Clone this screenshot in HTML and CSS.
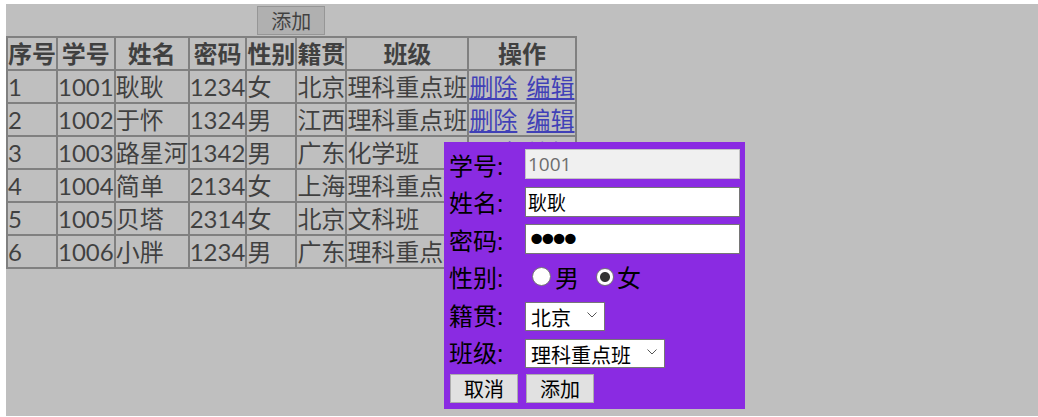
FILE: index.html
```html
<!DOCTYPE html>
<html lang="zh">
<head>
    <meta charset="UTF-8">
    <meta name="viewport" content="width=device-width, initial-scale=1.0">
    <title>学生管理</title>
    <link rel="stylesheet" href="styles.css">
</head>
<body>
    <div class="page">
        <!-- 学生列表 -->
        <div class="list">
            <button class="btn add-top">添加</button>
            <table class="students">
                <tr><th>序号</th><th>学号</th><th>姓名</th><th>密码</th><th>性别</th><th>籍贯</th><th>班级</th><th>操作</th></tr>
                <tr><td>1</td><td>1001</td><td>耿耿</td><td>1234</td><td>女</td><td>北京</td><td>理科重点班</td><td class="ops"><a href="#">删除</a> <a href="#">编辑</a></td></tr>
                <tr><td>2</td><td>1002</td><td>于怀</td><td>1324</td><td>男</td><td>江西</td><td>理科重点班</td><td class="ops"><a href="#">删除</a> <a href="#">编辑</a></td></tr>
                <tr><td>3</td><td>1003</td><td>路星河</td><td>1342</td><td>男</td><td>广东</td><td>化学班</td><td class="ops"><a href="#">删除</a> <a href="#">编辑</a></td></tr>
                <tr><td>4</td><td>1004</td><td>简单</td><td>2134</td><td>女</td><td>上海</td><td>理科重点班</td><td class="ops"><a href="#">删除</a> <a href="#">编辑</a></td></tr>
                <tr><td>5</td><td>1005</td><td>贝塔</td><td>2314</td><td>女</td><td>北京</td><td>文科班</td><td class="ops"><a href="#">删除</a> <a href="#">编辑</a></td></tr>
                <tr><td>6</td><td>1006</td><td>小胖</td><td>1234</td><td>男</td><td>广东</td><td>理科重点班</td><td class="ops"><a href="#">删除</a> <a href="#">编辑</a></td></tr>
            </table>
        </div>

        <!-- 遮罩 -->
        <div class="mask"></div>

        <!-- 编辑弹窗 -->
        <form class="dialog">
            <div class="row">
                <label>学号:</label>
                <input class="field" type="text" value="1001" disabled>
            </div>
            <div class="row">
                <label>姓名:</label>
                <input class="field" type="text" value="耿耿">
            </div>
            <div class="row">
                <label>密码:</label>
                <input class="field pwd" type="password" value="1234">
            </div>
            <div class="row">
                <label>性别:</label>
                <input class="radio first" type="radio" name="sex"><span>男</span>
                <input class="radio second" type="radio" name="sex" checked><span>女</span>
            </div>
            <div class="row">
                <label>籍贯:</label>
                <span class="select">
                    <select class="city">
                        <option>北京</option>
                        <option>江西</option>
                        <option>广东</option>
                        <option>上海</option>
                    </select>
                    <svg width="10" height="6" viewBox="0 0 10 6"><polyline points="0.5,0.5 5,5 9.5,0.5" fill="none" stroke="#555" stroke-width="1"/></svg>
                </span>
            </div>
            <div class="row">
                <label>班级:</label>
                <span class="select">
                    <select class="klass">
                        <option>理科重点班</option>
                        <option>化学班</option>
                        <option>文科班</option>
                    </select>
                    <svg width="10" height="6" viewBox="0 0 10 6"><polyline points="0.5,0.5 5,5 9.5,0.5" fill="none" stroke="#555" stroke-width="1"/></svg>
                </span>
            </div>
            <div class="row buttons">
                <button type="button" class="btn">取消</button>
                <button type="button" class="btn">添加</button>
            </div>
        </form>
    </div>
</body>
</html>
```

FILE: styles.css
```css
body {
    margin: 0;
    font-family: "Open Sans", "Noto Sans CJK SC", sans-serif;
    background-color: white;
}
.page {
    position: relative;
    margin: 4px 0 0 6px;
    height: 412px;
    padding-top: 2px;
    box-sizing: border-box;
}
.list {
    display: inline-block;
}
.btn {
    font-family: "Noto Sans CJK SC", sans-serif;
    font-size: 20px;
    width: 68px;
    height: 29px;
    padding: 0;
    line-height: 27px;
    color: black;
    background-color: #e1e1e1;
    border: 1px solid #adadad;
}
.add-top {
    display: block;
    margin: 0 auto 1px;
}
.students {
    border: 1px solid #808080;
    border-spacing: 0;
    font-family: Lato, "Noto Sans CJK SC", sans-serif;
    font-size: 24px;
    line-height: 31px;
    color: black;
}
.students th, .students td {
    border: 1px solid #808080;
    padding: 0;
    white-space: nowrap;
}
.students .ops {
    word-spacing: 3px;
}
.students a {
    color: #0000ee;
}
.mask {
    position: absolute;
    top: 0;
    left: 0;
    right: 0;
    bottom: 0;
    background-color: rgba(128, 128, 128, 0.5);
}
.dialog {
    position: absolute;
    left: 438px;
    top: 138px;
    width: 301px;
    height: 267px;
    box-sizing: border-box;
    margin: 0;
    padding: 7px 5px 6px;
    background-color: #8a2be2;
    display: flex;
    flex-direction: column;
    gap: 7.5px;
}
.row {
    display: flex;
    align-items: center;
    height: 30px;
    font-size: 24px;
    color: black;
}
.row label {
    width: 76px;
    flex: none;
}
.field {
    width: 215px;
    height: 30px;
    box-sizing: border-box;
    margin: 0;
    padding: 0 2px;
    font-family: "Open Sans", "Noto Sans CJK SC", sans-serif;
    font-size: 19px;
    color: black;
    background-color: white;
    border: 1px solid #767676;
    outline: none;
}
.field:disabled {
    color: #6d6d6d;
    background-color: #f0f0f0;
    border-color: #c4c4c4;
}
.pwd {
    font-family: "DejaVu Sans", sans-serif;
    font-size: 36px;
    letter-spacing: -10px;
    padding-left: 0;
}
.radio {
    appearance: none;
    width: 19px;
    height: 19px;
    margin: 0 4px 0 0;
    border: 1px solid #767676;
    border-radius: 50%;
    background-color: white;
}
.radio:checked {
    background: radial-gradient(circle, #333 0 4.5px, white 5.5px);
}
.radio.first {
    margin-left: 7px;
}
.radio.second {
    margin-left: 17px;
    width: 18px;
    height: 18px;
    margin-right: 3px;
}
.select {
    position: relative;
    display: inline-block;
    height: 29px;
}
.select select {
    appearance: none;
    height: 29px;
    margin: 0;
    padding: 0 0 0 5px;
    font-family: "Noto Sans CJK SC", sans-serif;
    font-size: 20px;
    color: black;
    background-color: white;
    border: 1px solid #767676;
    border-radius: 0;
    outline: none;
}
.city {
    width: 80px;
}
.klass {
    width: 140px;
}
.select svg {
    position: absolute;
    right: 8px;
    top: 12px;
    pointer-events: none;
}
.buttons {
    height: 29px;
    gap: 8px;
    padding-left: 1px;
}
```
